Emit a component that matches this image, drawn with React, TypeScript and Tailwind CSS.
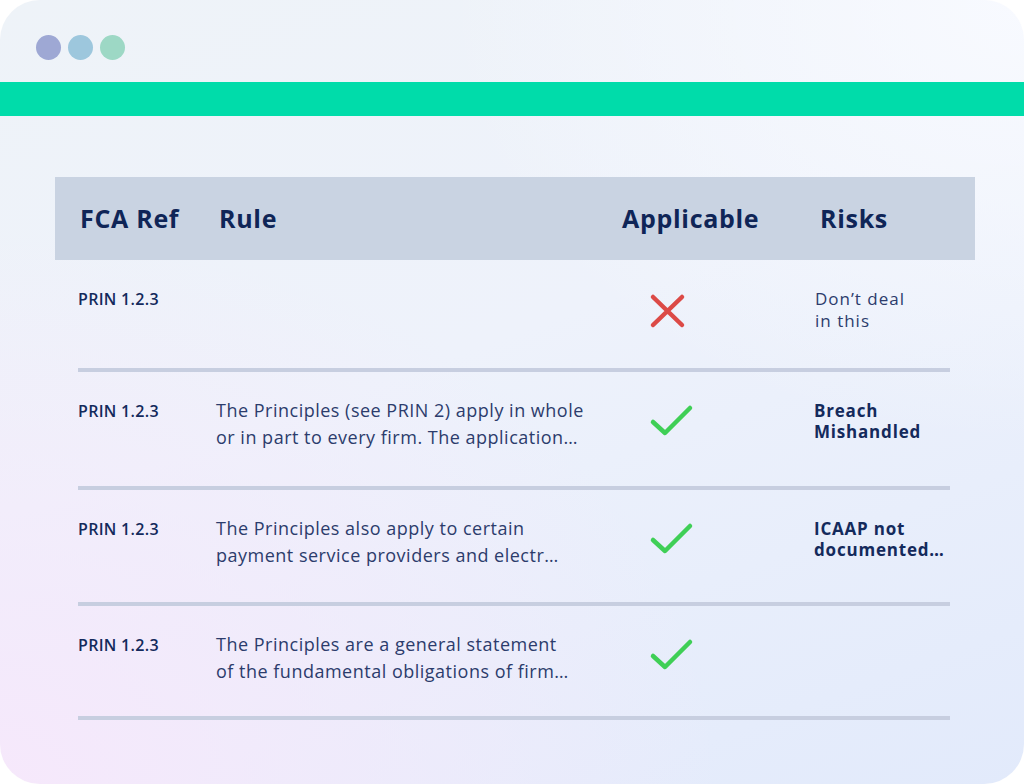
import React from 'react';

type Row = {
  ref: string;
  rule: string[];
  ok: boolean;
  risk: string[];
  riskBold: boolean;
  h: string;
};

const rows: Row[] = [
  { ref: 'PRIN 1.2.3', rule: [], ok: false, risk: ['Don’t deal', 'in this'], riskBold: false, h: 'h-[108px]' },
  {
    ref: 'PRIN 1.2.3',
    rule: ['The Principles (see PRIN 2) apply in whole', 'or in part to every firm. The application…'],
    ok: true,
    risk: ['Breach', 'Mishandled'],
    riskBold: true,
    h: 'h-[114px]',
  },
  {
    ref: 'PRIN 1.2.3',
    rule: ['The Principles also apply to certain', 'payment service providers and electr…'],
    ok: true,
    risk: ['ICAAP not', 'documented…'],
    riskBold: true,
    h: 'h-[112px]',
  },
  {
    ref: 'PRIN 1.2.3',
    rule: ['The Principles are a general statement', 'of the fundamental obligations of firm…'],
    ok: true,
    risk: [],
    riskBold: false,
    h: 'h-[110px]',
  },
];

const Cross = () => (
  <svg width="44" height="40" viewBox="0 0 44 40" fill="none">
    <path d="M5 5L34 33M34 5L5 33" stroke="#dc4a46" strokeWidth="4.5" strokeLinecap="round" />
  </svg>
);

const Check = () => (
  <svg width="46" height="40" viewBox="0 0 46 40" fill="none">
    <path d="M5 18L17 29L42 4" stroke="#3fcf56" strokeWidth="4.5" strokeLinecap="round" strokeLinejoin="round" />
  </svg>
);

export default function App() {
  return (
    <div className="w-[1024px] h-[784px] bg-white font-['Open_Sans',sans-serif]">
      <div className="w-full h-full rounded-[40px] overflow-hidden bg-[radial-gradient(ellipse_at_0%_100%,#f6e8fb_0%,rgba(246,232,251,0)_50%),radial-gradient(ellipse_at_100%_0%,#f8faff_0%,rgba(248,250,255,0)_40%),linear-gradient(160deg,#eef3f8_0%,#eef2fb_45%,#e2eafb_100%)]">
        {/* window dots */}
        <div className="h-[82px] flex gap-[7px] pl-[36px] pt-[35px]">
          <div className="w-[25px] h-[25px] rounded-full bg-[#9ea8d4]" />
          <div className="w-[25px] h-[25px] rounded-full bg-[#9dc7dd]" />
          <div className="w-[25px] h-[25px] rounded-full bg-[#9dd8c5]" />
        </div>
        <div className="h-[34px] bg-[#00dcaa]" />

        {/* table */}
        <div className="mt-[61px] ml-[55px] mr-[49px]">
          <div className="h-[83px] bg-[#c9d3e2] grid grid-cols-[139px_403px_198px_1fr] items-center pl-[25px] text-[25px] font-bold text-[#0f2557] tracking-[0.7px]">
            <div>FCA Ref</div>
            <div>Rule</div>
            <div>Applicable</div>
            <div>Risks</div>
          </div>

          <div className="ml-[23px] mr-[25px]">
            {rows.map((r, i) => (
              <div key={i}>
                <div className={`${r.h} grid grid-cols-[138px_380px_219px_1fr] pt-[25px]`}>
                  <div className="text-[16px] leading-[24px] font-semibold text-[#142a5c] tracking-[0.3px] pt-[2px]">
                    {r.ref}
                  </div>
                  <div className="text-[18px] leading-[27px] text-[#2c3c6c] tracking-[0.5px]">
                    {r.rule.map((l, j) => (
                      <div key={j}>{l}</div>
                    ))}
                  </div>
                  <div className="pl-[52px] pt-[7px]">{r.ok ? <Check /> : <Cross />}</div>
                  <div
                    className={
                      r.riskBold
                        ? 'text-[17px] leading-[21px] font-bold text-[#142a5c] tracking-[0.8px] pt-[3px] -ml-[1px]'
                        : 'text-[17px] leading-[22px] text-[#2c3c6c] tracking-[1px] pt-[3px]'
                    }
                  >
                    {r.risk.map((l, j) => (
                      <div key={j}>{l}</div>
                    ))}
                  </div>
                </div>
                <div className="h-[4px] bg-[#c7cee0]" />
              </div>
            ))}
          </div>
        </div>
      </div>
    </div>
  );
}
